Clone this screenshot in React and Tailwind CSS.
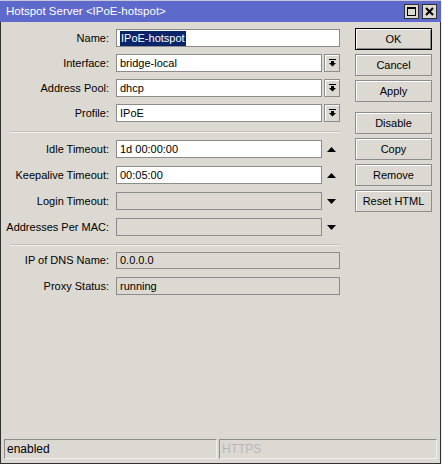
import React from "react";

const font = "font-['Liberation_Sans',Arial,sans-serif]";

function DropIcon() {
  return (
    <svg width="7" height="8" viewBox="0 0 7 8" className="block">
      <rect x="0" y="0" width="7" height="1" fill="#000" />
      <rect x="2" y="2" width="3" height="2" fill="#000" />
      <path d="M0 4h7L3.5 7.5z" fill="#000" />
    </svg>
  );
}

function UpIcon() {
  return (
    <svg width="9" height="5" viewBox="0 0 9 5" className="block">
      <path d="M0 5h9L4.5 0z" fill="#000" />
    </svg>
  );
}

function DownIcon() {
  return (
    <svg width="9" height="5" viewBox="0 0 9 5" className="block">
      <path d="M0 0h9L4.5 5z" fill="#000" />
    </svg>
  );
}

function Label({ children }) {
  return <div className="w-[108px] text-right whitespace-nowrap shrink-0">{children}</div>;
}

function Field({ children, w, disabled, h = "h-[18px]" }) {
  return (
    <div
      className={
        "flex items-center px-[3px] border border-[#8c8c8c] overflow-hidden whitespace-nowrap " +
        (disabled ? "bg-[#dcd9d2] " : "bg-white ") +
        w +
        " " +
        h
      }
    >
      {children}
    </div>
  );
}

function DropBtn() {
  return (
    <div className="w-[16px] h-[18px] ml-[2px] flex items-center justify-center border border-[#8c8c8c] shadow-[inset_1px_1px_0_#fff] bg-[#dcd9d2]">
      <DropIcon />
    </div>
  );
}

function Btn({ children, def, mt = "" }) {
  return (
    <div
      className={
        "w-[77px] h-[22px] flex items-center justify-center bg-[#dcd9d2] " +
        (def
          ? "border border-black shadow-[inset_1px_1px_0_#fff,inset_-1px_-1px_0_#8c8c8c] "
          : "border border-[#8c8c8c] shadow-[inset_1px_1px_0_#fff] ") +
        mt
      }
    >
      {children}
    </div>
  );
}

function Sep({ className }) {
  return <div className={"ml-[9px] w-[330px] h-[2px] border-t border-[#c4c1ba] border-b border-b-[#f2f0ec] " + className} />;
}

export default function App() {
  return (
    <div className={"w-[442px] h-[464px] bg-[#f0f0f0] text-[11px] text-black leading-none " + font}>
      <div className="w-[441px] h-[464px] flex flex-col bg-[#dcd9d2]">
        {/* Title bar */}
        <div className="h-[22px] bg-[#5e69cc] flex items-center pl-[6px] pr-[4px] shrink-0 border-t border-[#c8c8d8]">
          <div className="text-white text-[11.5px] flex-1 pt-[1px]">Hotspot Server &lt;IPoE-hotspot&gt;</div>
          <div className="w-[15px] h-[15px] bg-[#dcd9d2] border border-[#303030] flex items-center justify-center">
            <div className="w-[9px] h-[9px] border border-black border-t-2" />
          </div>
          <div className="w-[15px] h-[15px] ml-[3px] bg-[#dcd9d2] border border-[#303030] flex items-center justify-center">
            <svg width="9" height="9" viewBox="0 0 9 9">
              <path d="M1 1L8 8M8 1L1 8" stroke="#000" strokeWidth="2" />
            </svg>
          </div>
        </div>

        {/* Body */}
        <div className="flex-1 flex flex-col border-l border-r border-b border-[#303030]">
          <div className="flex-1 flex">
            {/* Form */}
            <div className="w-[339px] pt-[7px] flex flex-col">
              <div className="flex items-center h-[18px]">
                <Label>Name:</Label>
                <div className="ml-[7px]">
                  <Field w="w-[224px]">
                    <span className="bg-[#0a246a] text-white px-[1px] py-[2px]">IPoE-hotspot</span>
                  </Field>
                </div>
              </div>
              <div className="flex items-center h-[18px] mt-[7px]">
                <Label>Interface:</Label>
                <div className="ml-[7px] flex">
                  <Field w="w-[206px]">bridge-local</Field>
                  <DropBtn />
                </div>
              </div>
              <div className="flex items-center h-[18px] mt-[7px]">
                <Label>Address Pool:</Label>
                <div className="ml-[7px] flex">
                  <Field w="w-[206px]">dhcp</Field>
                  <DropBtn />
                </div>
              </div>
              <div className="flex items-center h-[18px] mt-[7px]">
                <Label>Profile:</Label>
                <div className="ml-[7px] flex">
                  <Field w="w-[206px]">IPoE</Field>
                  <DropBtn />
                </div>
              </div>

              <Sep className="mt-[9px]" />

              <div className="flex items-center h-[18px] mt-[7px]">
                <Label>Idle Timeout:</Label>
                <div className="ml-[7px] flex items-center">
                  <Field w="w-[206px]">1d 00:00:00</Field>
                  <div className="w-[18px] flex justify-center"><UpIcon /></div>
                </div>
              </div>
              <div className="flex items-center h-[18px] mt-[8px]">
                <Label>Keepalive Timeout:</Label>
                <div className="ml-[7px] flex items-center">
                  <Field w="w-[206px]">00:05:00</Field>
                  <div className="w-[18px] flex justify-center"><UpIcon /></div>
                </div>
              </div>
              <div className="flex items-center h-[18px] mt-[8px]">
                <Label>Login Timeout:</Label>
                <div className="ml-[7px] flex items-center">
                  <Field w="w-[206px]" disabled></Field>
                  <div className="w-[18px] flex justify-center"><DownIcon /></div>
                </div>
              </div>
              <div className="flex items-center h-[18px] mt-[8px]">
                <Label>Addresses Per MAC:</Label>
                <div className="ml-[7px] flex items-center">
                  <Field w="w-[206px]" disabled></Field>
                  <div className="w-[18px] flex justify-center"><DownIcon /></div>
                </div>
              </div>

              <Sep className="mt-[8px]" />

              <div className="flex items-center h-[17px] mt-[6px]">
                <Label>IP of DNS Name:</Label>
                <div className="ml-[7px]">
                  <Field w="w-[224px]" h="h-[17px]" disabled>0.0.0.0</Field>
                </div>
              </div>
              <div className="flex items-center h-[18px] mt-[8px]">
                <Label>Proxy Status:</Label>
                <div className="ml-[7px]">
                  <Field w="w-[224px]" disabled>running</Field>
                </div>
              </div>
            </div>

            {/* Buttons */}
            <div className="ml-[15px] pt-[6px] flex flex-col">
              <Btn def>OK</Btn>
              <Btn mt="mt-[4px]">Cancel</Btn>
              <Btn mt="mt-[4px]">Apply</Btn>
              <Btn mt="mt-[10px]">Disable</Btn>
              <Btn mt="mt-[4px]">Copy</Btn>
              <Btn mt="mt-[4px]">Remove</Btn>
              <Btn mt="mt-[4px]">Reset HTML</Btn>
            </div>
          </div>

          {/* Status bar */}
          <div className="h-[20px] mb-[4px] px-[3px] flex gap-[2px] shrink-0">
            <div className="w-[213px] h-[20px] border border-[#8c8c8c] border-b-[#f2f0ec] border-r-[#f2f0ec] flex items-center px-[2px] text-[12px]">
              enabled
            </div>
            <div className="flex-1 h-[20px] border border-[#8c8c8c] border-b-[#f2f0ec] border-r-[#f2f0ec] flex items-center px-[2px] text-[12px] text-[#b8b8b8]">
              HTTPS
            </div>
          </div>
        </div>
      </div>
    </div>
  );
}
